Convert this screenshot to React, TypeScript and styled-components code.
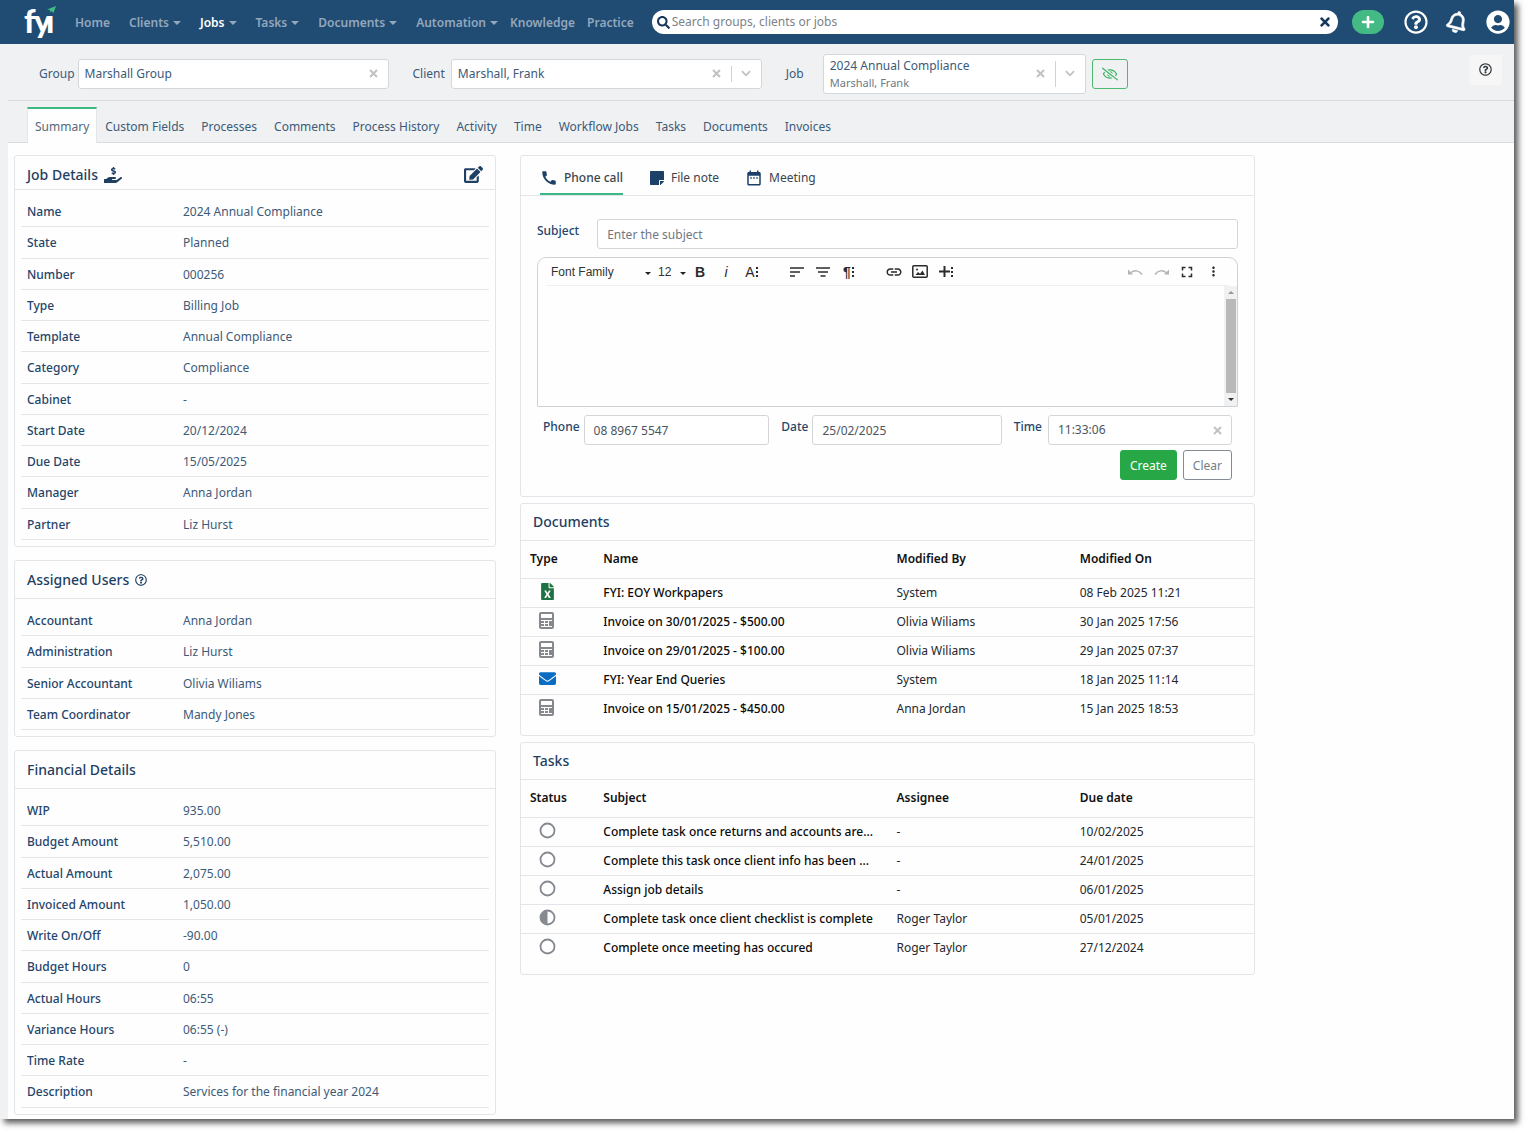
import React from "react";
import styled, { createGlobalStyle, css } from "styled-components";
import {
  FaEdit,
  FaEnvelope,
  FaFileExcel,
  FaHandHoldingUsd,
  FaPlus,
  FaRegBell,
  FaRegEyeSlash,
  FaRegQuestionCircle,
  FaSearch,
  FaStickyNote,
  FaTimes,
  FaUserCircle,
} from "react-icons/fa";
import { MdCall, MdDateRange, MdFullscreen, MdInsertLink, MdMoreVert } from "react-icons/md";

const navy = "#1f3f63";
const line = "#e3e5e8";
const green = "#3cb982";

const GlobalStyle = createGlobalStyle`
  *, *::before, *::after { box-sizing: border-box; }
  body { margin: 0; background: #fff; }
  body, button, input, select, textarea {
    font-family: "Noto Sans", "Open Sans", sans-serif;
    font-size: 12px;
    line-height: 18px;
  }
  button, input, select, textarea { margin: 0; color: inherit; }
  h2, dl, dd, dt { margin: 0; }
`;

const Window = styled.div`
  margin: 0 15px 15px 0;
  background: #fefefe;
  color: #3d5a78;
  box-shadow: 4px 4px 6px rgba(0, 0, 0, 0.65);
`;

const Header = styled.header`
  display: flex;
  align-items: center;
  height: 44px;
  padding: 0 4px 0 24px;
  background: #204c73;
`;

const Logo = styled.svg`
  flex: none;
  width: 34px;
  height: 40px;
  margin-right: 11px;
`;

const Nav = styled.nav`
  display: flex;
  flex: none;
  padding-top: 1px;
`;

const NavLink = styled.a<{ $active?: boolean; $menu?: boolean }>`
  display: flex;
  align-items: center;
  gap: 4px;
  padding: 0 6px;
  font-weight: 600;
  text-decoration: none;
  color: ${(p) => (p.$active ? "#fff" : "#93a7bd")};
  ${(p) =>
    p.$menu &&
    css`
      padding-left: 13px;
      &::after {
        content: "";
        border: 4px solid transparent;
        border-top-color: ${p.$active ? "#93a7bd" : "currentColor"};
        border-bottom: 0;
      }
    `}
`;

const SearchBox = styled.div`
  display: flex;
  flex: 1;
  align-items: center;
  gap: 2px;
  min-width: 0;
  height: 24px;
  margin: 0 14px 0 12px;
  padding: 0 6px 0 5px;
  border-radius: 12px;
  background: #fff;
  color: #17385b;
`;

const PlainInput = styled.input`
  flex: 1;
  min-width: 0;
  padding: 0;
  border: 0;
  outline: 0;
  background: transparent;
  &::placeholder {
    color: #7d8287;
    opacity: 1;
  }
`;

const IconButton = styled.button<{ $size?: number; $color?: string }>`
  display: flex;
  flex: none;
  align-items: center;
  justify-content: center;
  padding: 0;
  border: 0;
  background: transparent;
  color: ${(p) => p.$color ?? "inherit"};
  font-size: ${(p) => p.$size ?? 12}px;
`;

const AddButton = styled(IconButton)`
  width: 32px;
  height: 24px;
  border-radius: 12px;
  background: #43ba84;
  color: #fff;
`;

const HeaderActions = styled.div`
  display: flex;
  flex: none;
  align-items: center;
  gap: 18px;
  margin-left: 20px;
  color: #fff;
`;

const Tilt = styled.span`
  display: flex;
  transform: rotate(14deg);
`;

const Frame = styled.div`
  border-left: 8px solid #eff1f3;
`;

const FilterBar = styled.div`
  display: flex;
  align-items: center;
  height: 57px;
  padding: 3px 12px 0 31px;
  border-bottom: 1px solid #d9dbde;
  background: #eff1f3;
`;

const Filter = styled.div<{ $gap: number }>`
  display: flex;
  align-items: center;
  gap: ${(p) => p.$gap}px;
  margin-right: 24px;
`;

const Picker = styled.div<{ $width: number; $tall?: boolean }>`
  display: flex;
  align-items: center;
  width: ${(p) => p.$width}px;
  height: ${(p) => (p.$tall ? 40 : 30)}px;
  padding: 0 10px 0 6px;
  border: 1px solid #d5d8db;
  border-radius: 3px;
  background: #fff;
`;

const PickerText = styled.div`
  display: flex;
  flex: 1;
  flex-direction: column;
  min-width: 0;
  small {
    font-size: 11px;
    line-height: 16px;
    color: #6c7a88;
  }
`;

const PlainSelect = styled.select`
  appearance: none;
  width: 100%;
  padding: 0;
  border: 0;
  outline: 0;
  background: transparent;
`;

const PickerDivider = styled.span<{ $tall?: boolean }>`
  width: 1px;
  height: ${(p) => (p.$tall ? 26 : 16)}px;
  margin: 0 9px 0 10px;
  background: #d0d3d6;
`;

const VisibilityButton = styled(IconButton)`
  width: 36px;
  height: 30px;
  margin-left: -18px;
  border: 1px solid #4dba70;
  border-radius: 3px;
  color: #35b25c;
`;

const HelpButton = styled(IconButton)`
  width: 33px;
  height: 30px;
  margin: 0 0 8px auto;
  border-radius: 3px;
  background: #f6f6f7;
  color: #343a40;
`;

const Tabs = styled.nav`
  display: flex;
  height: 42px;
  padding: 6px 19px 0;
  border-bottom: 1px solid #d9dbde;
  background: #eff1f3;
`;

const Tab = styled.a<{ $active?: boolean }>`
  height: 36px;
  padding: 9px 9px 0 8px;
  border-top: 2px solid transparent;
  color: inherit;
  text-decoration: none;
  white-space: nowrap;
  ${(p) =>
    p.$active &&
    css`
      padding: 9px 7px 0;
      border: 1px solid ${line};
      border-top: 2px solid ${green};
      border-bottom: 0;
      background: #fefefe;
      color: #566779;
    `}
`;

const Content = styled.main`
  display: grid;
  grid-template-columns: minmax(0, 482fr) minmax(0, 735fr) minmax(0, 235fr);
  gap: 24px;
  align-items: start;
  padding: 12px 0 4px 6px;
`;

const Column = styled.div<{ $gap: number }>`
  display: flex;
  flex-direction: column;
  gap: ${(p) => p.$gap}px;
`;

const Card = styled.section`
  border: 1px solid ${line};
  border-radius: 3px;
`;

const CardHeader = styled.div<{ $height?: number; $top?: number }>`
  display: flex;
  align-items: center;
  gap: 6px;
  height: ${(p) => p.$height ?? 38}px;
  padding: ${(p) => p.$top ?? 0}px 12px 0;
  border-bottom: 1px solid ${line};
  color: ${navy};
`;

const CardTitle = styled.h2`
  font-size: 14px;
  font-weight: 500;
  line-height: 20px;
`;

const EditButton = styled(IconButton)`
  margin-left: auto;
`;

const Details = styled.dl`
  padding: 6px;
`;

const DetailRow = styled.div`
  display: grid;
  grid-template-columns: 1fr 2fr;
  padding: 7px 0 5px;
  border-bottom: 1px solid ${line};
  &:nth-child(4n + 2) {
    padding-bottom: 6px;
  }
  dt,
  dd {
    padding-left: 6px;
  }
  dt {
    font-weight: 500;
    color: #24456a;
  }
`;

const NoteTabs = styled.div`
  display: flex;
  gap: 26px;
  height: 40px;
  padding: 0 19px;
  border-bottom: 1px solid ${line};
`;

const NoteTab = styled.button<{ $active?: boolean }>`
  display: flex;
  align-items: center;
  gap: 6px;
  height: 39px;
  padding: 7px 0 0;
  border: 0;
  border-bottom: 2px solid ${(p) => (p.$active ? green : "transparent")};
  background: transparent;
  color: #3b444d;
  font-weight: ${(p) => (p.$active ? 500 : 400)};
  svg {
    color: #1d4068;
  }
`;

const NoteForm = styled.form`
  display: flex;
  flex-direction: column;
  padding: 23px 16px 16px;
`;

const FieldRow = styled.div`
  display: flex;
  gap: 12px;
`;

const Field = styled.div<{ $gap?: number; $grow?: number }>`
  display: flex;
  flex: ${(p) => p.$grow ?? 1} 1 0;
  gap: ${(p) => p.$gap ?? 4}px;
  min-width: 0;
`;

const FieldLabel = styled.label`
  padding-top: 3px;
  font-weight: 500;
  color: #24456a;
`;

const inputFrame = css`
  height: 30px;
  border: 1px solid #d3d6d9;
  border-radius: 3px;
  background: #fff;
  color: #4b5560;
`;

const TextInput = styled.input`
  ${inputFrame}
  flex: 1;
  min-width: 0;
  padding: 0 9px;
  &::placeholder {
    color: #6f7882;
    opacity: 1;
  }
`;

const ClearableInput = styled.div`
  ${inputFrame}
  display: flex;
  flex: 1;
  align-items: center;
  min-width: 0;
  padding: 0 9px;
`;

const Editor = styled.div`
  display: flex;
  flex-direction: column;
  height: 150px;
  margin: 8px 0;
  border: 1px solid #cfd2d4;
  border-radius: 9px 9px 0 0;
`;

const Toolbar = styled.div`
  display: flex;
  align-items: center;
  height: 28px;
  margin: 0 8px;
  padding: 0 3px 0 5px;
  border-bottom: 1px solid #eff0f1;
  color: #333;
`;

const ToolSelect = styled.span<{ $width: number }>`
  display: flex;
  align-items: center;
  width: ${(p) => p.$width}px;
  select {
    flex: 1;
    min-width: 0;
    font-family: "Liberation Sans", Arial, sans-serif;
  }
  & + & {
    margin: 0 1px 0 7px;
  }
  &::after {
    content: "";
    margin-top: 4px;
    border: 3px solid transparent;
    border-top-color: #222;
    border-bottom: 0;
  }
`;

const Tool = styled.button<{ $dim?: boolean }>`
  display: flex;
  align-items: center;
  justify-content: center;
  gap: 1px;
  width: 26px;
  height: 24px;
  padding: 0;
  border: 0;
  background: transparent;
  color: #2b2b2b;
  font-family: "Liberation Sans", Arial, sans-serif;
  font-size: 14px;
  opacity: ${(p) => (p.$dim ? 0.35 : 1)};
`;

const ToolGroup = styled.div<{ $end?: boolean }>`
  display: flex;
  margin-left: ${(p) => (p.$end ? "auto" : "19px")};
`;

const EditorBody = styled.div`
  display: flex;
  flex: 1;
  min-height: 0;
`;

const EditorText = styled.textarea`
  flex: 1;
  min-width: 0;
  padding: 8px;
  border: 0;
  outline: 0;
  resize: none;
  background: transparent;
`;

const ScrollTrack = styled.div`
  display: flex;
  flex-direction: column;
  align-items: center;
  justify-content: space-between;
  gap: 5px;
  width: 13px;
  padding: 5px 0;
  background: #f0f1f3;
`;

const ScrollThumb = styled.span`
  flex: 1;
  width: 10px;
  background: #b9b9b9;
`;

const ScrollArrow = styled.span<{ $down?: boolean }>`
  border: 3px solid transparent;
  ${(p) =>
    p.$down
      ? css`
          border-top-color: #333;
          border-bottom: 0;
        `
      : css`
          border-bottom-color: #999;
          border-top: 0;
        `}
`;

const FormFooter = styled.div`
  display: flex;
  flex-direction: column;
  gap: 5px;
  padding: 0 6px;
`;

const FormActions = styled.div`
  display: flex;
  justify-content: flex-end;
  gap: 6px;
`;

const FormButton = styled.button<{ $primary?: boolean }>`
  height: 30px;
  padding: 2px 9px 0;
  border: 1px solid ${(p) => (p.$primary ? "#27a745" : "#848b92")};
  border-radius: 3px;
  background: ${(p) => (p.$primary ? "#27a745" : "#fff")};
  color: ${(p) => (p.$primary ? "#fff" : "#757d85")};
`;

const DataTable = styled.table`
  width: 100%;
  margin-bottom: 12px;
  border-collapse: collapse;
  table-layout: fixed;
  color: #24282c;
  th,
  td {
    padding: 0 9px;
    border-bottom: 1px solid ${line};
    text-align: left;
    overflow: hidden;
    text-overflow: ellipsis;
    white-space: nowrap;
  }
  th {
    height: 37px;
    font-weight: 600;
    color: #111;
  }
  td {
    height: 29px;
  }
  tr:last-child td {
    border-bottom: 0;
  }
  td:nth-child(2) {
    font-weight: 500;
    color: #0c0c0c;
  }
  td:first-child {
    padding: 0 18px 3px;
  }
  td svg {
    display: block;
  }
`;

const Dots = () => (
  <svg width="3" height="12" viewBox="0 0 3 12" fill="currentColor" aria-hidden="true">
    <path d="M0 1h2v2H0zM0 5h2v2H0zM0 9h2v2H0z" />
  </svg>
);

const CrossIcon = ({ size = 9 }: { size?: number }) => (
  <svg width={size} height={size} viewBox="0 0 9 9" stroke="#bfc2c5" strokeWidth="2" aria-hidden="true">
    <path d="M1 1l7 7M8 1L1 8" />
  </svg>
);

const ChevronIcon = () => (
  <svg width="10" height="7" viewBox="0 0 11 7" fill="none" stroke="#bfc2c5" strokeWidth="2" aria-hidden="true">
    <path d="M1 1l4.500 4.500L10 1" />
  </svg>
);

const InvoiceIcon = () => (
  <svg width="15" height="17" viewBox="0 0 15 17" fill="#85888d" aria-label="Invoice">
    <path
      fillRule="evenodd"
      d="M2 0h11a2 2 0 0 1 2 2v13a2 2 0 0 1-2 2H2a2 2 0 0 1-2-2V2a2 2 0 0 1 2-2zM2 2v4h11V2zM2 8v7h11V8z"
    />
    <path d="M2 9h3v2H2zM6 9h3v2H6zM10 9h3v5h-3zM2 12h3v2H2zM6 12h3v2H6z" />
  </svg>
);

const StatusIcon = ({ half }: { half?: boolean }) => (
  <svg width="17" height="17" viewBox="0 0 17 17" fill="none" aria-label={half ? "In progress" : "Not started"}>
    <circle cx="8.500" cy="8.500" r="7" stroke="#858990" strokeWidth="1.800" />
    {half && <path d="M8.500 1.500a7 7 0 0 0 0 14z" fill="#858990" />}
  </svg>
);

const UndoIcon = ({ redo }: { redo?: boolean }) => (
  <svg width="15" height="8" viewBox="0 0 15 8" fill="none" stroke="currentColor" strokeWidth="1.500" aria-hidden="true">
    <g transform={redo ? "matrix(-1 0 0 1 15 0)" : undefined}>
      <path d="M3 4.500C6 2 11 2 14 6.500" />
      <path d="M0 1.500v5h5z" fill="currentColor" stroke="none" />
    </g>
  </svg>
);

const LinesIcon = ({ center }: { center?: boolean }) => (
  <svg width="14" height="10" viewBox="0 0 14 10" stroke="currentColor" strokeWidth="1.600" aria-hidden="true">
    <path d={center ? "M0 1h14M2 5h10M4.500 9h5" : "M0 1h14M0 5h10M0 9h5"} />
  </svg>
);

const ImageIcon = () => (
  <svg width="16" height="13" viewBox="0 0 16 13" fill="none" aria-hidden="true">
    <rect x="0.800" y="0.800" width="14.400" height="11.400" rx="1" stroke="currentColor" strokeWidth="1.500" />
    <path d="M3.500 10l2.500-3 2 1.800L10.500 5.500 13 10z" fill="currentColor" />
    <circle cx="5" cy="4.500" r="1" fill="currentColor" />
  </svg>
);

const LogoMark = () => (
  <Logo viewBox="0 0 34 40" role="img" aria-label="fyi">
    <text x="0 10 22" y="31" fill="#fff" fontFamily="Lato, sans-serif" fontWeight="900" fontSize="32">
      fyı
    </text>
    <path d="M23 7.500L32 4l-2.500 7-2-2-1.500 1.500v-2.500z" fill="#3fbd85" />
  </Logo>
);

const navItems = [
  { label: "Home" },
  { label: "Clients", menu: true },
  { label: "Jobs", menu: true, active: true },
  { label: "Tasks", menu: true },
  { label: "Documents", menu: true },
  { label: "Automation", menu: true },
  { label: "Knowledge" },
  { label: "Practice" },
];

const tabs = [
  "Summary",
  "Custom Fields",
  "Processes",
  "Comments",
  "Process History",
  "Activity",
  "Time",
  "Workflow Jobs",
  "Tasks",
  "Documents",
  "Invoices",
];

const jobDetails = [
  ["Name", "2024 Annual Compliance"],
  ["State", "Planned"],
  ["Number", "000256"],
  ["Type", "Billing Job"],
  ["Template", "Annual Compliance"],
  ["Category", "Compliance"],
  ["Cabinet", "-"],
  ["Start Date", "20/12/2024"],
  ["Due Date", "15/05/2025"],
  ["Manager", "Anna Jordan"],
  ["Partner", "Liz Hurst"],
];

const assignedUsers = [
  ["Accountant", "Anna Jordan"],
  ["Administration", "Liz Hurst"],
  ["Senior Accountant", "Olivia Wiliams"],
  ["Team Coordinator", "Mandy Jones"],
];

const financialDetails = [
  ["WIP", "935.00"],
  ["Budget Amount", "5,510.00"],
  ["Actual Amount", "2,075.00"],
  ["Invoiced Amount", "1,050.00"],
  ["Write On/Off", "-90.00"],
  ["Budget Hours", "0"],
  ["Actual Hours", "06:55"],
  ["Variance Hours", "06:55 (-)"],
  ["Time Rate", "-"],
  ["Description", "Services for the financial year 2024"],
];

const excelIcon = <FaFileExcel size={17} color="#1f7244" aria-label="Spreadsheet" />;
const mailIcon = <FaEnvelope size={17} color="#0b6cc4" aria-label="Email" />;

const documentRows: React.ReactNode[][] = [
  [excelIcon, "FYI: EOY Workpapers", "System", "08 Feb 2025 11:21"],
  [<InvoiceIcon />, "Invoice on 30/01/2025 - $500.00", "Olivia Wiliams", "30 Jan 2025 17:56"],
  [<InvoiceIcon />, "Invoice on 29/01/2025 - $100.00", "Olivia Wiliams", "29 Jan 2025 07:37"],
  [mailIcon, "FYI: Year End Queries", "System", "18 Jan 2025 11:14"],
  [<InvoiceIcon />, "Invoice on 15/01/2025 - $450.00", "Anna Jordan", "15 Jan 2025 18:53"],
];

const taskRows: React.ReactNode[][] = [
  [<StatusIcon />, "Complete task once returns and accounts are...", "-", "10/02/2025"],
  [<StatusIcon />, "Complete this task once client info has been ...", "-", "24/01/2025"],
  [<StatusIcon />, "Assign job details", "-", "06/01/2025"],
  [<StatusIcon half />, "Complete task once client checklist is complete", "Roger Taylor", "05/01/2025"],
  [<StatusIcon />, "Complete once meeting has occured", "Roger Taylor", "27/12/2024"],
];

const DetailList = ({ rows }: { rows: string[][] }) => (
  <Details>
    {rows.map(([label, value]) => (
      <DetailRow key={label}>
        <dt>{label}</dt>
        <dd>{value}</dd>
      </DetailRow>
    ))}
  </Details>
);

const TableCard = ({ title, columns, rows }: { title: string; columns: string[]; rows: React.ReactNode[][] }) => (
  <Card>
    <CardHeader $height={37}>
      <CardTitle>{title}</CardTitle>
    </CardHeader>
    <DataTable>
      <colgroup>
        <col width="10%" />
        <col width="40%" />
        <col width="25%" />
        <col width="25%" />
      </colgroup>
      <thead>
        <tr>
          {columns.map((c) => (
            <th key={c} scope="col">
              {c}
            </th>
          ))}
        </tr>
      </thead>
      <tbody>
        {rows.map((row, i) => (
          <tr key={i}>
            {row.map((cell, j) => (
              <td key={j}>{cell}</td>
            ))}
          </tr>
        ))}
      </tbody>
    </DataTable>
  </Card>
);

export default function App() {
  return (
    <>
      <GlobalStyle />
      <Window>
        <Header>
          <LogoMark />
          <Nav aria-label="Main">
            {navItems.map((item) => (
              <NavLink key={item.label} href="#" $menu={item.menu} $active={item.active}>
                {item.label}
              </NavLink>
            ))}
          </Nav>
          <SearchBox>
            <FaSearch size={13} aria-hidden="true" />
            <PlainInput aria-label="Search" placeholder="Search groups, clients or jobs" />
            <IconButton type="button" aria-label="Clear search" $size={14}>
              <FaTimes />
            </IconButton>
          </SearchBox>
          <AddButton type="button" aria-label="Add" $size={14}>
            <FaPlus />
          </AddButton>
          <HeaderActions>
            <IconButton type="button" aria-label="Help" $size={24}>
              <FaRegQuestionCircle />
            </IconButton>
            <IconButton type="button" aria-label="Notifications" $size={22}>
              <Tilt>
                <FaRegBell stroke="currentColor" strokeWidth={14} />
              </Tilt>
            </IconButton>
            <IconButton type="button" aria-label="Account" $size={24}>
              <FaUserCircle />
            </IconButton>
          </HeaderActions>
        </Header>

        <Frame>
          <FilterBar>
            <Filter $gap={3}>
              <label htmlFor="group">Group</label>
              <Picker $width={311}>
                <PlainInput id="group" defaultValue="Marshall Group" />
                <IconButton type="button" aria-label="Clear group">
                  <CrossIcon />
                </IconButton>
              </Picker>
            </Filter>
            <Filter $gap={6}>
              <label htmlFor="client">Client</label>
              <Picker $width={311}>
                <PickerText>
                  <PlainSelect id="client">
                    <option>Marshall, Frank</option>
                  </PlainSelect>
                </PickerText>
                <IconButton type="button" aria-label="Clear client">
                  <CrossIcon />
                </IconButton>
                <PickerDivider />
                <ChevronIcon />
              </Picker>
            </Filter>
            <Filter $gap={19}>
              <label htmlFor="job">Job</label>
              <Picker $width={263} $tall>
                <PickerText>
                  <PlainSelect id="job">
                    <option>2024 Annual Compliance</option>
                  </PlainSelect>
                  <small>Marshall, Frank</small>
                </PickerText>
                <IconButton type="button" aria-label="Clear job">
                  <CrossIcon />
                </IconButton>
                <PickerDivider $tall />
                <ChevronIcon />
              </Picker>
            </Filter>
            <VisibilityButton type="button" aria-label="Hide completed jobs" $size={16}>
              <FaRegEyeSlash />
            </VisibilityButton>
            <HelpButton type="button" aria-label="Page help" $size={13}>
              <FaRegQuestionCircle />
            </HelpButton>
          </FilterBar>

          <Tabs aria-label="Job sections">
            {tabs.map((t, i) => (
              <Tab key={t} href="#" $active={i === 0}>
                {t}
              </Tab>
            ))}
          </Tabs>

          <Content>
            <Column $gap={13}>
              <Card>
                <CardHeader $height={34} $top={4}>
                  <CardTitle>Job Details</CardTitle>
                  <FaHandHoldingUsd size={18} aria-hidden="true" />
                  <EditButton type="button" aria-label="Edit job" $size={19}>
                    <FaEdit />
                  </EditButton>
                </CardHeader>
                <DetailList rows={jobDetails} />
              </Card>
              <Card>
                <CardHeader>
                  <CardTitle>Assigned Users</CardTitle>
                  <FaRegQuestionCircle size={12} aria-hidden="true" />
                </CardHeader>
                <DetailList rows={assignedUsers} />
              </Card>
              <Card>
                <CardHeader>
                  <CardTitle>Financial Details</CardTitle>
                </CardHeader>
                <DetailList rows={financialDetails} />
              </Card>
            </Column>

            <Column $gap={6}>
              <Card>
                <NoteTabs>
                  <NoteTab type="button" $active>
                    <MdCall size={18} aria-hidden="true" />
                    Phone call
                  </NoteTab>
                  <NoteTab type="button">
                    <FaStickyNote size={16} aria-hidden="true" />
                    File note
                  </NoteTab>
                  <NoteTab type="button">
                    <MdDateRange size={18} aria-hidden="true" />
                    Meeting
                  </NoteTab>
                </NoteTabs>
                <NoteForm>
                  <Field $gap={18}>
                    <FieldLabel htmlFor="subject">Subject</FieldLabel>
                    <TextInput id="subject" placeholder="Enter the subject" />
                  </Field>
                  <Editor>
                    <Toolbar>
                      <ToolSelect $width={100}>
                        <PlainSelect aria-label="Font family">
                          <option>Font Family</option>
                        </PlainSelect>
                      </ToolSelect>
                      <ToolSelect $width={28}>
                        <PlainSelect aria-label="Font size">
                          <option>12</option>
                        </PlainSelect>
                      </ToolSelect>
                      <Tool type="button" aria-label="Bold">
                        <b>B</b>
                      </Tool>
                      <Tool type="button" aria-label="Italic">
                        <i>i</i>
                      </Tool>
                      <Tool type="button" aria-label="More text">
                        A<Dots />
                      </Tool>
                      <ToolGroup>
                        <Tool type="button" aria-label="Align left">
                          <LinesIcon />
                        </Tool>
                        <Tool type="button" aria-label="Align center">
                          <LinesIcon center />
                        </Tool>
                        <Tool type="button" aria-label="More paragraph">
                          <b>¶</b>
                          <Dots />
                        </Tool>
                      </ToolGroup>
                      <ToolGroup>
                        <Tool type="button" aria-label="Insert link">
                          <MdInsertLink size={18} />
                        </Tool>
                        <Tool type="button" aria-label="Insert image">
                          <ImageIcon />
                        </Tool>
                        <Tool type="button" aria-label="More rich">
                          <svg width="11" height="11" viewBox="0 0 11 11" stroke="currentColor" strokeWidth="2">
                            <path d="M5.500 0v11M0 5.500h11" />
                          </svg>
                          <Dots />
                        </Tool>
                      </ToolGroup>
                      <ToolGroup $end>
                        <Tool type="button" aria-label="Undo" $dim>
                          <UndoIcon />
                        </Tool>
                        <Tool type="button" aria-label="Redo" $dim>
                          <UndoIcon redo />
                        </Tool>
                        <Tool type="button" aria-label="Full screen">
                          <MdFullscreen size={18} />
                        </Tool>
                        <Tool type="button" aria-label="More">
                          <MdMoreVert size={15} />
                        </Tool>
                      </ToolGroup>
                    </Toolbar>
                    <EditorBody>
                      <EditorText aria-label="Note" />
                      <ScrollTrack aria-hidden="true">
                        <ScrollArrow />
                        <ScrollThumb />
                        <ScrollArrow $down />
                      </ScrollTrack>
                    </EditorBody>
                  </Editor>
                  <FormFooter>
                    <FieldRow>
                      <Field $grow={227}>
                        <FieldLabel htmlFor="phone">Phone</FieldLabel>
                        <TextInput id="phone" defaultValue="08 8967 5547" />
                      </Field>
                      <Field $grow={221}>
                        <FieldLabel htmlFor="date">Date</FieldLabel>
                        <TextInput id="date" defaultValue="25/02/2025" />
                      </Field>
                      <Field $grow={219} $gap={6}>
                        <FieldLabel htmlFor="time">Time</FieldLabel>
                        <ClearableInput>
                          <PlainInput id="time" defaultValue="11:33:06" />
                          <IconButton type="button" aria-label="Clear time">
                            <CrossIcon />
                          </IconButton>
                        </ClearableInput>
                      </Field>
                    </FieldRow>
                    <FormActions>
                      <FormButton type="button" $primary>
                        Create
                      </FormButton>
                      <FormButton type="button">Clear</FormButton>
                    </FormActions>
                  </FormFooter>
                </NoteForm>
              </Card>
              <TableCard
                title="Documents"
                columns={["Type", "Name", "Modified By", "Modified On"]}
                rows={documentRows}
              />
              <TableCard title="Tasks" columns={["Status", "Subject", "Assignee", "Due date"]} rows={taskRows} />
            </Column>
          </Content>
        </Frame>
      </Window>
    </>
  );
}
